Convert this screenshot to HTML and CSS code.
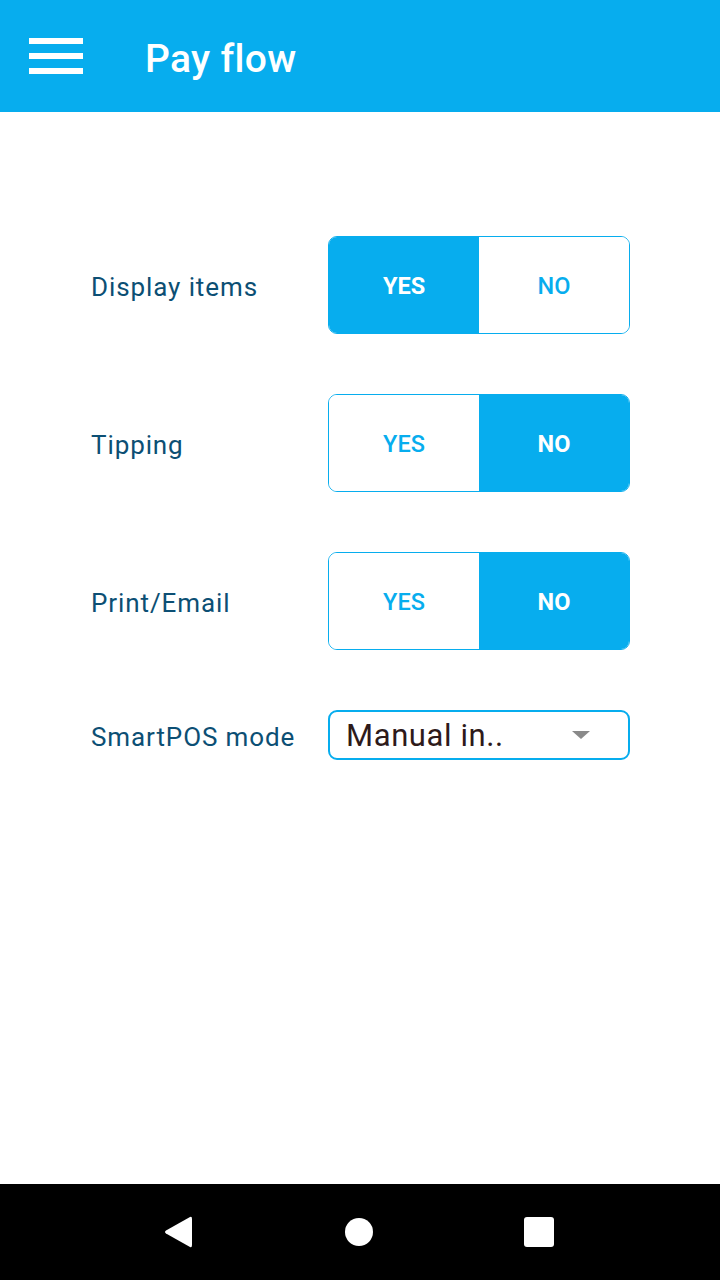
FILE: index.html
```html
<!DOCTYPE html>
<html>
<head>
<meta charset="utf-8">
<link rel="stylesheet" href="styles.css">
</head>
<body>
<div class="app">
  <header class="topbar">
    <div class="menu"><span></span><span></span><span></span></div>
    <h1 class="title">Pay flow</h1>
  </header>
  <main class="content">
    <div class="row">
      <div class="label">Display items</div>
      <div class="toggle">
        <div class="opt on">YES</div>
        <div class="opt">NO</div>
      </div>
    </div>
    <div class="row">
      <div class="label">Tipping</div>
      <div class="toggle">
        <div class="opt">YES</div>
        <div class="opt on">NO</div>
      </div>
    </div>
    <div class="row">
      <div class="label">Print/Email</div>
      <div class="toggle">
        <div class="opt">YES</div>
        <div class="opt on">NO</div>
      </div>
    </div>
    <div class="row">
      <div class="label">SmartPOS mode</div>
      <div class="select">
        <span class="select-text">Manual in..</span>
        <span class="caret"></span>
      </div>
    </div>
  </main>
  <nav class="navbar">
    <svg class="nav-back" width="30" height="34" viewBox="0 0 30 34"><path d="M27 2 Q29 1 29 4 L29 30 Q29 33 27 32 L3 18.5 Q1 17 3 15.5 Z" fill="#fff"/></svg>
    <span class="nav-home"></span>
    <span class="nav-recent"></span>
  </nav>
</div>
</body>
</html>
```
FILE: styles.css
```css
* { box-sizing: border-box; }
html, body { margin: 0; padding: 0; }
body {
  font-family: Roboto, "Noto Sans", sans-serif;
  background: #fff;
}
.app {
  width: 720px;
  height: 1280px;
  display: flex;
  flex-direction: column;
}
.topbar {
  height: 112px;
  background: #07adee;
  display: flex;
  align-items: center;
  padding-left: 29px;
}
.menu {
  width: 54px;
  display: flex;
  flex-direction: column;
  gap: 9px;
  margin-top: -1px;
}
.menu span {
  display: block;
  height: 6px;
  background: #fff;
}
.title {
  margin: 6px 0 0 62px;
  color: #fff;
  font-size: 39px;
  font-weight: 500;
  letter-spacing: 0.3px;
}
.content {
  flex: 1;
  padding: 124px 0 0 91px;
  display: flex;
  flex-direction: column;
  gap: 60px;
}
.row {
  display: flex;
  align-items: center;
}
.label {
  width: 237px;
  font-size: 26px;
  color: #0c4f74;
  letter-spacing: 0.9px;
  padding-top: 3px;
}
.toggle {
  width: 302px;
  height: 98px;
  border: 1px solid #07adee;
  border-radius: 9px;
  overflow: hidden;
  display: flex;
}
.opt {
  flex: 1;
  display: flex;
  align-items: center;
  justify-content: center;
  font-size: 23.5px;
  font-weight: 500;
  color: #07adee;
  background: #fff;
  padding-top: 1px;
}
.opt.on {
  background: #07adee;
  color: #fff;
  font-weight: 700;
}
.select {
  width: 302px;
  height: 50px;
  border: 2px solid #07adee;
  border-radius: 9px;
  display: flex;
  align-items: center;
  padding-left: 16px;
  padding-right: 38px;
  justify-content: space-between;
}
.select-text {
  font-size: 31px;
  color: #2e1a1a;
  letter-spacing: 0.6px;
  padding-top: 1px;
}
.caret {
  width: 0;
  height: 0;
  border-left: 9px solid transparent;
  border-right: 9px solid transparent;
  border-top: 8px solid #8a8a8a;
}
.navbar {
  height: 96px;
  background: #000;
  display: flex;
  align-items: center;
  justify-content: space-between;
  padding: 0 166px 0 163px;
}
.nav-back { display: block; }
.nav-home {
  width: 28px;
  height: 28px;
  border-radius: 50%;
  background: #fff;
}
.nav-recent {
  width: 30px;
  height: 30px;
  border-radius: 3px;
  background: #fff;
}
```
